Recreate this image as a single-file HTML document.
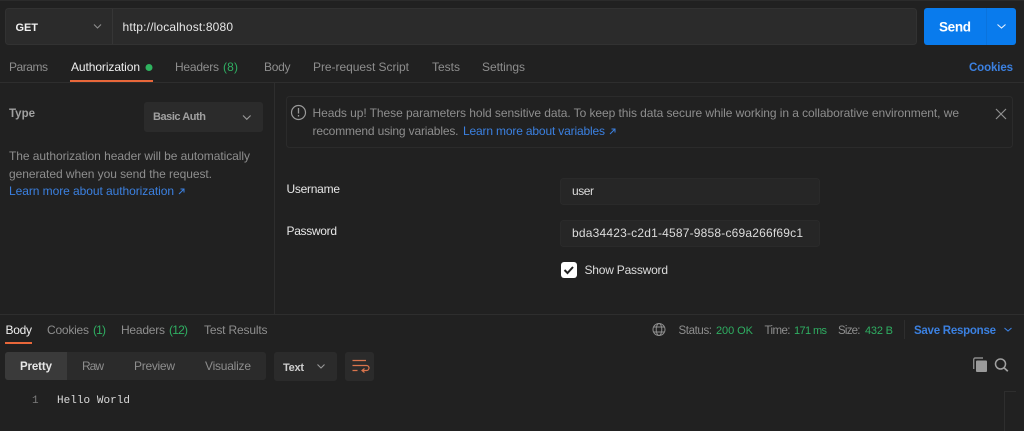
<!DOCTYPE html>
<html lang="en"><head><meta charset="utf-8"><title>Postman</title>
<style>
html,body{margin:0;padding:0;background:#212121;width:1024px;height:431px;overflow:hidden}
svg{display:block;font-family:"Liberation Sans",sans-serif;font-size:12px;filter:blur(.25px)}
.g{fill:#8e8e8e}.w{fill:#efefef}.s{fill:#a8a8a8}.gr{fill:#2fae62}.b{fill:#3b80e0}
.bd{font-weight:bold}
.m{font-family:"Liberation Mono",monospace;font-size:11px}
</style></head><body>
<svg width="1024" height="431" viewBox="0 0 1024 431" xmlns="http://www.w3.org/2000/svg">
<rect width="1024" height="431" fill="#212121"/>
<rect width="1024" height="1" fill="#2b2b2b"/>
<!-- URL bar -->
<rect x="5.5" y="8.5" width="911" height="36" rx="3" fill="#2b2b2b" stroke="#323232"/>
<line x1="112.5" y1="9" x2="112.5" y2="44" stroke="#363636"/>
<text x="15.5" y="31" class="bd" fill="#f0f0f0" font-size="11" textLength="22.5">GET</text>
<path d="M94 24.500l3.500 3.500 3.500-3.500" fill="none" stroke="#8e8e8e" stroke-width="1.100"/>
<text x="122.500" y="31" fill="#e6e6e6" textLength="110.500">http://localhost:8080</text>
<rect x="924" y="8" width="92" height="37" rx="3" fill="#097bed"/>
<line x1="986.500" y1="8" x2="986.500" y2="45" stroke="#0a73dd"/>
<text x="939" y="31.500" class="bd" fill="#fff" font-size="13.500" textLength="32">Send</text>
<path d="M997.500 24.500l4 3.500 4-3.500" fill="none" stroke="#e8f2fe" stroke-width="1.100"/>
<!-- Tabs -->
<text x="9" y="71" class="g" textLength="39">Params</text>
<text x="71" y="71" class="w" textLength="69">Authorization</text>
<circle cx="149" cy="67.500" r="3.500" fill="#2fb35f"/>
<text x="175" y="71" class="g" textLength="44">Headers</text>
<text x="223" y="71" class="gr" textLength="15">(8)</text>
<text x="264" y="71" class="g" textLength="26.500">Body</text>
<text x="313" y="71" class="g" textLength="96">Pre-request Script</text>
<text x="432" y="71" class="g" textLength="28">Tests</text>
<text x="482" y="71" class="g" textLength="43">Settings</text>
<text x="969" y="71" class="b bd" font-size="11.500" textLength="44">Cookies</text>
<line x1="0" y1="82.500" x2="1024" y2="82.500" stroke="#2e2e2e"/>
<rect x="70" y="80" width="83" height="2" fill="#e8673a"/>
<line x1="274.500" y1="83" x2="274.500" y2="314" stroke="#2e2e2e"/>
<!-- Left auth -->
<text x="9" y="117" class="bd" fill="#a0a0a0" font-size="11.500" textLength="26">Type</text>
<rect x="144" y="102" width="119" height="30" rx="3" fill="#2b2b2b"/>
<text x="153" y="120" class="bd" fill="#a0a0a0" font-size="11" textLength="53">Basic Auth</text>
<path d="M243 115.500l3.800 3.800 3.800-3.800" fill="none" stroke="#999" stroke-width="1.100"/>
<text x="9" y="160" class="g" textLength="241">The authorization header will be automatically</text>
<text x="9" y="178" class="g" textLength="203">generated when you send the request.</text>
<text x="9" y="195" class="b" textLength="165">Learn more about authorization</text>
<path d="M179 194l5-5M180.500 189h3.500v3.500" fill="none" stroke="#3b80e0" stroke-width="1"/>
<!-- Notice -->
<rect x="286.500" y="96.500" width="726" height="51" rx="3" fill="none" stroke="#2b2b2b"/>
<circle cx="298.500" cy="112.500" r="7" fill="none" stroke="#999" stroke-width="1.200"/>
<path d="M298.500 108v5.500M298.500 115v1.500" fill="none" stroke="#999" stroke-width="1.300"/>
<text x="312.500" y="117" class="g" textLength="646.500">Heads up! These parameters hold sensitive data. To keep this data secure while working in a collaborative environment, we</text>
<text x="312.500" y="135" class="g" textLength="146">recommend using variables.</text>
<text x="463" y="135" class="b" textLength="142">Learn more about variables</text>
<path d="M610 134l5-5M611.500 129h3.500v3.500" fill="none" stroke="#3b80e0" stroke-width="1"/>
<path d="M996 109l10 10M1006 109l-10 10" fill="none" stroke="#909090" stroke-width="1.200"/>
<!-- Form -->
<text x="286.500" y="193" fill="#e6e6e6" textLength="53.500">Username</text>
<text x="286.500" y="235" fill="#e6e6e6" textLength="50.500">Password</text>
<rect x="560.500" y="178.500" width="259" height="26" rx="3" fill="#262626" stroke="#2a2a2a"/>
<rect x="560.500" y="220.500" width="259" height="26" rx="3" fill="#262626" stroke="#2a2a2a"/>
<text x="572" y="195" fill="#dcdcdc" textLength="22">user</text>
<text x="572" y="237" fill="#dcdcdc" textLength="231">bda34423-c2d1-4587-9858-c69a266f69c1</text>
<rect x="561" y="262" width="16" height="16" rx="3" fill="#fff"/>
<path d="M564.500 270l3 3 5.500-6" fill="none" stroke="#212121" stroke-width="2"/>
<text x="584.500" y="274" fill="#dcdcdc" textLength="83.500">Show Password</text>
<!-- Response -->
<line x1="0" y1="314.500" x2="1024" y2="314.500" stroke="#2e2e2e"/>
<text x="5.500" y="334" class="w" textLength="26.500">Body</text>
<rect x="5" y="342" width="27" height="2" fill="#e8673a"/>
<text x="47" y="334" class="g" textLength="42">Cookies</text>
<text x="93" y="334" class="gr" textLength="13">(1)</text>
<text x="121" y="334" class="g" textLength="44">Headers</text>
<text x="169" y="334" class="gr" textLength="19">(12)</text>
<text x="204" y="334" class="g" textLength="63.500">Test Results</text>
<g fill="none" stroke="#8e8e8e" stroke-width="1">
<circle cx="659" cy="329.500" r="6"/>
<ellipse cx="659" cy="329.500" rx="2.800" ry="6"/>
<path d="M653.700 327h10.600M653.700 332h10.600"/>
</g>
<text x="678.500" y="334" class="g" font-size="11.500" textLength="33.500">Status:</text>
<text x="716" y="334" class="gr" font-size="11" textLength="37">200 OK</text>
<text x="764.500" y="334" class="g" font-size="11.500" textLength="26">Time:</text>
<text x="794" y="334" class="gr" font-size="11" textLength="33">171 ms</text>
<text x="838" y="334" class="g" font-size="11.500" textLength="22.500">Size:</text>
<text x="865" y="334" class="gr" font-size="11" textLength="28">432 B</text>
<line x1="904.500" y1="320" x2="904.500" y2="339" stroke="#2e2e2e"/>
<text x="914" y="334" class="b bd" font-size="11.500" textLength="82">Save Response</text>
<path d="M1004.500 328l3.500 3 3.500-3" fill="none" stroke="#3b80e0" stroke-width="1.100"/>
<!-- Toolbar -->
<rect x="5" y="352" width="261" height="28" rx="3" fill="#2b2b2b"/>
<path d="M8 352h59v28H8a3 3 0 0 1-3-3v-22a3 3 0 0 1 3-3z" fill="#3a3a3a"/>
<text x="20" y="370" class="bd" fill="#e6e6e6" font-size="11.500" textLength="32">Pretty</text>
<text x="82" y="370" class="g" textLength="22">Raw</text>
<text x="134" y="370" class="g" textLength="41">Preview</text>
<text x="205" y="370" class="g" textLength="46">Visualize</text>
<rect x="274" y="352" width="63" height="29" rx="3" fill="#2b2b2b"/>
<text x="283" y="371" class="bd" fill="#cfcfcf" font-size="11" textLength="21">Text</text>
<path d="M317.500 364.500l3.500 3.500 3.500-3.500" fill="none" stroke="#999" stroke-width="1.100"/>
<rect x="345" y="352" width="29" height="29" rx="3" fill="#2b2b2b"/>
<path d="M352.500 360.500h13.500M352.500 365.500h14a2.500 2.500 0 0 1 0 5h-4M364.500 368.500l-2.500 2 2.500 2M352.500 370.500h5" fill="none" stroke="#d9744c" stroke-width="1.200"/>
<!-- Body -->
<text x="32" y="403" class="m" fill="#7c7c7c">1</text>
<text x="57" y="403" class="m" fill="#dadada" textLength="73">Hello World</text>
<path d="M973.700 369v-9.500a1.500 1.500 0 0 1 1.500-1.500H983" fill="none" stroke="#8a8a8a" stroke-width="1.400"/>
<rect x="976" y="360.500" width="11" height="11.500" rx="1" fill="#9a9a9a"/>
<circle cx="1000.500" cy="364" r="5" fill="none" stroke="#a0a0a0" stroke-width="1.500"/>
<path d="M1004 367.800l3.800 3.500" fill="none" stroke="#a0a0a0" stroke-width="1.700"/>
<path d="M1016 391.500h-11.500V431" fill="none" stroke="#2e2e2e"/>
</svg>
</body></html>
